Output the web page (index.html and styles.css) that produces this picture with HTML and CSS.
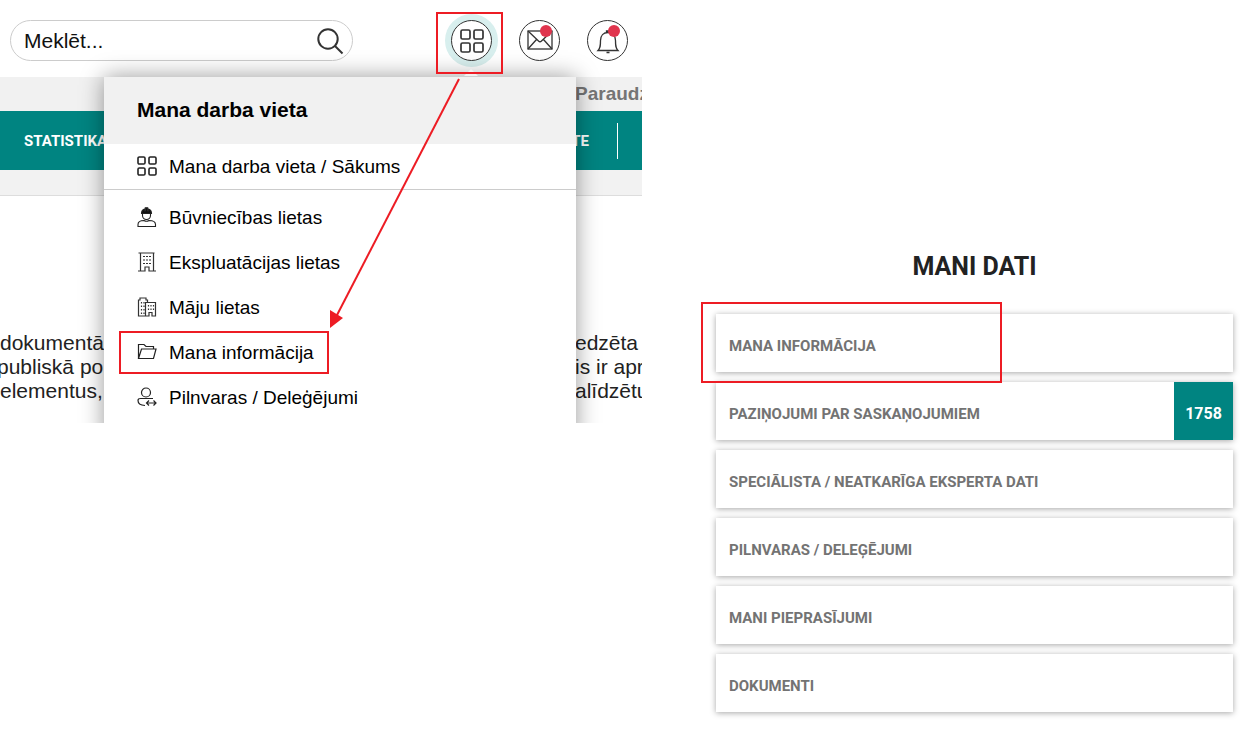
FILE: index.html
```html
<!DOCTYPE html>
<html lang="lv">
<head>
<meta charset="utf-8">
<meta name="viewport" content="width=device-width, initial-scale=1">
<title>Mana darba vieta</title>
<link rel="stylesheet" href="styles.css">
</head>
<body>
<div class="page">
  <section class="portal">
    <header class="topbar">
      <form class="search" role="search">
        <input class="search-input" type="text" value="Meklēt..." aria-label="Meklēt">
        <button class="search-button" type="button" aria-label="Meklēt">
          <svg width="28" height="28" viewBox="0 0 28 28" fill="none" stroke="#333" stroke-width="2"><circle cx="12" cy="12" r="9.700"/><path d="M19 19 26.500 26.500"/></svg>
        </button>
      </form>
      <div class="actions">
        <button class="round active" type="button" aria-label="Mana darba vieta">
          <svg width="24" height="24" viewBox="0 0 24 24" fill="none" stroke="#333" stroke-width="1.700"><rect x="1" y="1" width="9" height="9" rx="1.500"/><rect x="14" y="1" width="9" height="9" rx="1.500"/><rect x="1" y="14" width="9" height="9" rx="1.500"/><rect x="14" y="14" width="9" height="9" rx="1.500"/></svg>
        </button>
        <button class="round alert" type="button" aria-label="Ziņojumi">
          <svg width="26" height="22" viewBox="0 0 26 22" fill="none" stroke="#333" stroke-width="1.300"><rect x="1" y="1" width="24" height="18"/><path d="M1 1 11.500 11Q13 12.500 14.500 11L25 1M1 19 9.500 9.500M25 19 16.500 9.500"/></svg>
        </button>
        <button class="round alert" type="button" aria-label="Paziņojumi">
          <svg width="24" height="26" viewBox="0 0 24 26" fill="none" stroke="#333" stroke-width="1.300"><path d="M2 22.500C4.500 20 4.500 17.500 4.500 12.500C4.500 7.500 7.500 4.500 12 4.500S19.500 7.500 19.500 12.500C19.500 17.500 19.500 20 22 22.500ZM10.500 4.500V3h3V4.500M10.500 24.500h3"/></svg>
        </button>
      </div>
    </header>
    <div class="strip"><span class="tail">Paraudz</span></div>
    <nav class="mainnav">
      <a class="nav-link" href="#">STATISTIKA</a>
      <a class="nav-link nav-end" href="#">TE</a>
    </nav>
    <div class="substrip"></div>
    <div class="copy">
      <p><span>dokumentā</span><span class="tail">edzēta</span></p>
      <p class="outdent"><span>publiskā po</span><span class="tail">is ir apr</span></p>
      <p><span>elementus,</span><span class="tail">alīdzētu</span></p>
    </div>

    <div class="menu">
      <h2 class="menu-title">Mana darba vieta</h2>
      <a class="menu-item menu-home" href="#">
        <svg width="20" height="20" viewBox="0 0 20 20" fill="none" stroke="#222" stroke-width="1.600"><rect x="1" y="1" width="7" height="7" rx="1.300"/><rect x="12" y="1" width="7" height="7" rx="1.300"/><rect x="1" y="12" width="7" height="7" rx="1.300"/><rect x="12" y="12" width="7" height="7" rx="1.300"/></svg>
        Mana darba vieta / Sākums</a>
      <ul class="menu-list">
        <li><a class="menu-item" href="#">
          <svg width="20" height="20" viewBox="0 0 20 20" fill="none" stroke="#222" stroke-width="1.100"><path d="M5.500 6V8.500a4 4 0 0 0 8 0V6M1 19.500V17.500C1 14.500 4 13.500 7 13.500Q9.500 15 12 13.500C15 13.500 18.500 14.500 18.500 17.500V19.500Z"/><path d="M4.500 6.500C4.500 4 6 2.500 7.500 2V4H8.300V.800H10.700V4H11.500V2C13 2.500 14.500 4 14.500 6.500Z" fill="#111"/></svg>
          Būvniecības lietas</a></li>
        <li><a class="menu-item" href="#">
          <svg width="20" height="20" viewBox="0 0 20 20" fill="none" stroke="#333" stroke-width="1.200"><path d="M1.500 1h16M3.500 1v18M16.500 1v18M1 19h7v-4h4v4h7"/><path d="M6 4.500h8M6 8h8M6 11.500h8" stroke-dasharray="2 1"/></svg>
          Ekspluatācijas lietas</a></li>
        <li><a class="menu-item" href="#">
          <svg width="20" height="20" viewBox="0 0 20 20" fill="none" stroke="#333" stroke-width="1.200"><path d="M8.500 19H1.500V3H3V1h6v2h1.500v2M8.500 19V5.500h10V19h-3.500v-3.500h-3V19Z"/><path d="M4.500 5v12M7 5v12M11.500 8v6M14 8v6M16.500 8v6" stroke-dasharray="1.500 2"/></svg>
          Māju lietas</a></li>
        <li><a class="menu-item marked" href="#">
          <svg width="20" height="20" viewBox="0 0 20 20" fill="none" stroke="#222" stroke-width="1.200"><path d="M1.500 16.500V2.500h5.500L9 4.500h7.500V7M1.500 16.500H16.500L19 7H4.500Z"/></svg>
          Mana informācija</a></li>
        <li><a class="menu-item" href="#">
          <svg width="20" height="20" viewBox="0 0 20 20" fill="none" stroke="#222" stroke-width="1.200"><circle cx="9" cy="5.500" r="4.500"/><path d="M16 11.500H3.500Q1 11.500 1 13.500C1 16.500 3.500 18.300 8 18.500M9.500 16h9.500M12 13.500 9.500 16l2.500 2.500M16.500 13.500 19 16l-2.500 2.500"/></svg>
          Pilnvaras / Deleģējumi</a></li>
      </ul>
      <svg class="pointer" width="140" height="256" viewBox="0 0 140 256"><path d="M135 2 12 240" stroke="#ed1c24" stroke-width="2"/><path d="M6 251V233L19 241Z" fill="#ed1c24"/></svg>
    </div>
  </section>

  <main class="data">
    <h1 class="data-title">MANI DATI</h1>
    <ul class="cards">
      <li class="highlighted"><a class="card" href="#"><span class="label">MANA INFORMĀCIJA</span></a></li>
      <li><a class="card" href="#"><span class="label">PAZIŅOJUMI PAR SASKAŅOJUMIEM</span><span class="count">1758</span></a></li>
      <li><a class="card" href="#"><span class="label">SPECIĀLISTA / NEATKARĪGA EKSPERTA DATI</span></a></li>
      <li><a class="card" href="#"><span class="label">PILNVARAS / DELEĢĒJUMI</span></a></li>
      <li><a class="card" href="#"><span class="label">MANI PIEPRASĪJUMI</span></a></li>
      <li><a class="card" href="#"><span class="label">DOKUMENTI</span></a></li>
    </ul>
  </main>
</div>
</body>
</html>
```
FILE: styles.css
```css
*, *::before, *::after { box-sizing: border-box; }
body {
  margin: 0;
  background: #fff;
  color: #222;
  font-family: "Liberation Sans", Arial, sans-serif;
}
a { color: inherit; text-decoration: none; }
ul { list-style: none; margin: 0; padding: 0; }
svg { display: block; flex: none; }

.page {
  display: grid;
  grid-template-columns: 642fr 614fr;
  align-items: start;
}

.portal { position: relative; overflow: hidden; min-width: 0; }

.topbar {
  display: flex;
  align-items: center;
  justify-content: space-between;
  padding: 20px 14px 16px 10px;
}
.search {
  display: flex;
  align-items: center;
  flex: 0 1 343px;
  height: 41px;
  padding: 0 8px 0 13px;
  border: 1px solid #ccc;
  border-radius: 21px;
}
.search-input {
  flex: 1;
  min-width: 0;
  padding: 0;
  border: 0;
  outline: 0;
  background: none;
  color: #111;
  font: 21px "Liberation Sans", Arial, sans-serif;
}
.search-button { padding: 0; border: 0; background: none; }

.actions { display: flex; gap: 27px; }
.round {
  position: relative;
  display: flex;
  align-items: center;
  justify-content: center;
  width: 41px;
  height: 41px;
  padding: 0;
  border: 1px solid #333;
  border-radius: 50%;
  background: #fff;
}
.active { box-shadow: 0 0 0 6px #d8efee; }
.active::after {
  content: "";
  position: absolute;
  z-index: 3;
  inset: -9px -12px -14px -16px;
  border: 2px solid #ed1c24;
}
.alert::after {
  content: "";
  position: absolute;
  top: 4px;
  right: 7px;
  width: 12px;
  height: 12px;
  border-radius: 50%;
  background: #e0344d;
}

.tail { width: 67px; white-space: nowrap; }
.strip {
  display: flex;
  justify-content: flex-end;
  height: 34px;
  background: #f1f1f1;
  color: #757575;
  font-size: 19px;
  font-weight: bold;
  line-height: 34px;
}
.mainnav {
  display: flex;
  align-items: center;
  justify-content: space-between;
  height: 59px;
  padding: 0 24px;
  background: #008481;
  color: #fff;
}
.nav-link { font: bold 15px/36px Roboto, sans-serif; }
.nav-end { padding-right: 28px; border-right: 1px solid #fff; }
.substrip {
  height: 26px;
  background: #f2f2f2;
  border-bottom: 1px solid #ddd;
}
.copy {
  padding: 135px 0 20px;
  font-size: 21px;
  line-height: 24px;
}
.copy p { display: flex; justify-content: space-between; margin: 0; }
.copy .outdent { margin-left: -3px; }

.menu {
  position: absolute;
  z-index: 1;
  top: 77px;
  right: 66px;
  width: 472px;
  padding-bottom: 24px;
  background: #fff;
  box-shadow: 0 0 22px rgba(0, 0, 0, .4);
  color: #000;
}
.menu::before {
  content: "";
  position: absolute;
  top: -8px;
  right: 98px;
  border: 7px solid transparent;
  border-top: 0;
  border-bottom-color: #f1f1f1;
}
.menu-title {
  margin: 0;
  padding: 0 33px 2px;
  background: #f1f1f1;
  font-size: 21px;
  line-height: 65px;
}
.menu-item {
  position: relative;
  display: flex;
  align-items: center;
  gap: 12px;
  height: 45px;
  padding: 0 33px;
  font-size: 19px;
}
.menu-item svg { margin-bottom: 2px; }
.menu-home { height: 46px; border-bottom: 1px solid #ccc; }
.menu-list { padding-top: 5px; }
.marked::after {
  content: "";
  position: absolute;
  inset: 1px 247px 1px 15px;
  border: 2px solid #ed1c24;
}
.pointer { position: absolute; top: 0; left: 220px; }

.data { padding: 245px 23px 20px 74px; min-width: 0; }
.data-title {
  margin: 0 0 25px;
  font: bold 25px/44px Roboto, sans-serif;
  text-align: center;
}
.cards { display: grid; gap: 10px; }
.card {
  display: flex;
  align-items: center;
  justify-content: space-between;
  height: 58px;
  padding-left: 13px;
  background: #fff;
  box-shadow: 0 1px 6px rgba(0, 0, 0, .35);
  color: #737373;
  font: bold 15px/24px Roboto, sans-serif;
}
.label { padding-top: 5px; }
.count {
  align-self: stretch;
  width: 59px;
  padding-top: 5px;
  background: #008481;
  color: #fff;
  font-size: 16px;
  line-height: 53px;
  text-align: center;
}
.highlighted { position: relative; }
.highlighted::after {
  content: "";
  position: absolute;
  top: -12px;
  left: -15px;
  width: 301px;
  height: 81px;
  border: 2px solid #ed1c24;
}
```
